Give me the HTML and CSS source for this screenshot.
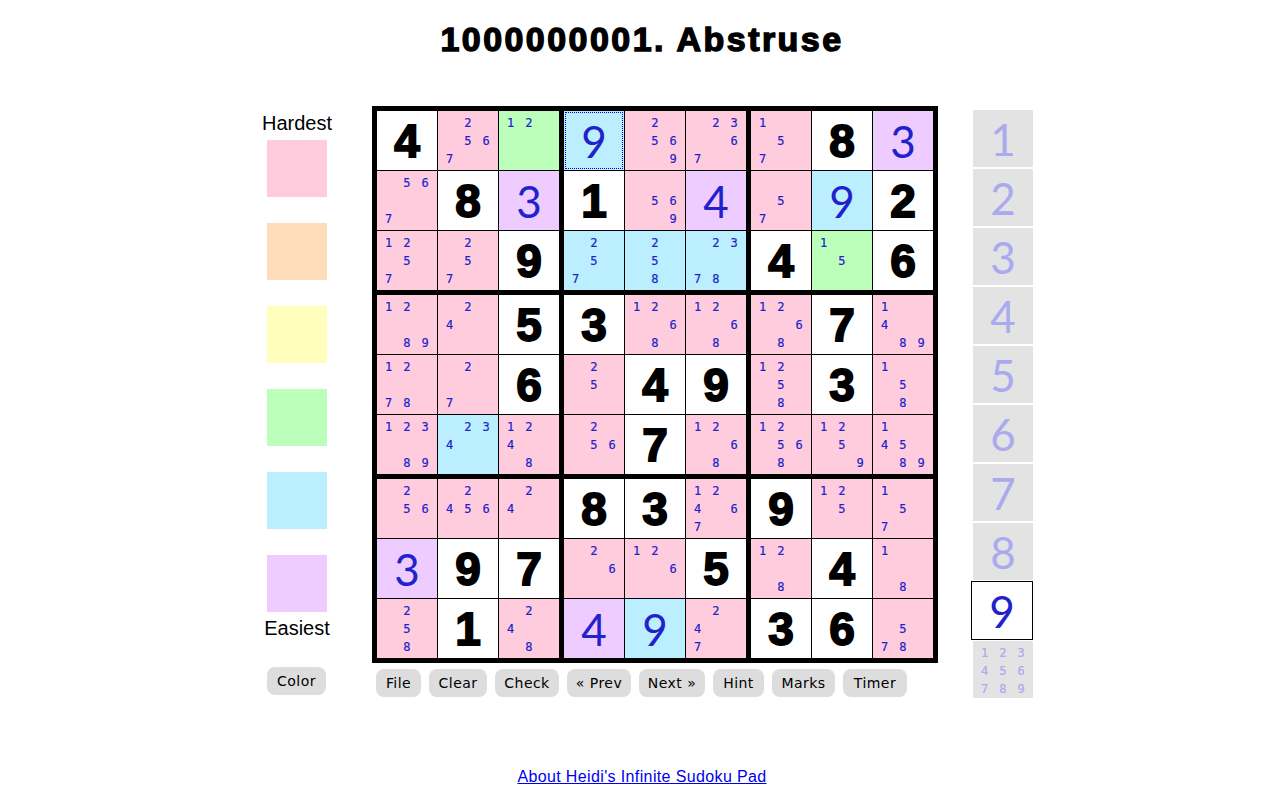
FILE: index.html
```html
<!DOCTYPE html>
<html>
<head>
    <title>1000000001. Abstruse</title>
    <link rel="stylesheet" href="styles.css">
</head>
<body>
    <h1>1000000001. Abstruse</h1>

    <div class="game">
        <div class="colors">
            <div class="color-label">Hardest</div>
            <div class="swatch pink"></div>
            <div class="swatch orange"></div>
            <div class="swatch yellow"></div>
            <div class="swatch green"></div>
            <div class="swatch blue"></div>
            <div class="swatch purple"></div>
            <div class="color-label">Easiest</div>
            <button class="color-btn">Color</button>
        </div>

        <div class="center">
            <div class="board">
                <div class="box">
                    <div class="cell given">4</div>
                    <div class="cell marks pink">  2
  5 6
7</div>
                    <div class="cell marks green">1 2</div>
                    <div class="cell marks pink">  5 6

7</div>
                    <div class="cell given">8</div>
                    <div class="cell big purple">3</div>
                    <div class="cell marks pink">1 2
  5
7</div>
                    <div class="cell marks pink">  2
  5
7</div>
                    <div class="cell given">9</div>
                </div>
                <div class="box">
                    <div class="cell big blue focus">9</div>
                    <div class="cell marks pink">  2
  5 6
    9</div>
                    <div class="cell marks pink">  2 3
    6
7</div>
                    <div class="cell given">1</div>
                    <div class="cell marks pink">
  5 6
    9</div>
                    <div class="cell big purple">4</div>
                    <div class="cell marks blue">  2
  5
7</div>
                    <div class="cell marks blue">  2
  5
  8</div>
                    <div class="cell marks blue">  2 3

7 8</div>
                </div>
                <div class="box">
                    <div class="cell marks pink">1
  5
7</div>
                    <div class="cell given">8</div>
                    <div class="cell big purple">3</div>
                    <div class="cell marks pink">
  5
7</div>
                    <div class="cell big blue">9</div>
                    <div class="cell given">2</div>
                    <div class="cell given">4</div>
                    <div class="cell marks green">1
  5</div>
                    <div class="cell given">6</div>
                </div>

                <div class="box">
                    <div class="cell marks pink">1 2

  8 9</div>
                    <div class="cell marks pink">  2
4</div>
                    <div class="cell given">5</div>
                    <div class="cell marks pink">1 2

7 8</div>
                    <div class="cell marks pink">  2

7</div>
                    <div class="cell given">6</div>
                    <div class="cell marks pink">1 2 3

  8 9</div>
                    <div class="cell marks blue">  2 3
4</div>
                    <div class="cell marks pink">1 2
4
  8</div>
                </div>
                <div class="box">
                    <div class="cell given">3</div>
                    <div class="cell marks pink">1 2
    6
  8</div>
                    <div class="cell marks pink">1 2
    6
  8</div>
                    <div class="cell marks pink">  2
  5</div>
                    <div class="cell given">4</div>
                    <div class="cell given">9</div>
                    <div class="cell marks pink">  2
  5 6</div>
                    <div class="cell given">7</div>
                    <div class="cell marks pink">1 2
    6
  8</div>
                </div>
                <div class="box">
                    <div class="cell marks pink">1 2
    6
  8</div>
                    <div class="cell given">7</div>
                    <div class="cell marks pink">1
4
  8 9</div>
                    <div class="cell marks pink">1 2
  5
  8</div>
                    <div class="cell given">3</div>
                    <div class="cell marks pink">1
  5
  8</div>
                    <div class="cell marks pink">1 2
  5 6
  8</div>
                    <div class="cell marks pink">1 2
  5
    9</div>
                    <div class="cell marks pink">1
4 5
  8 9</div>
                </div>

                <div class="box">
                    <div class="cell marks pink">  2
  5 6</div>
                    <div class="cell marks pink">  2
4 5 6</div>
                    <div class="cell marks pink">  2
4</div>
                    <div class="cell big purple">3</div>
                    <div class="cell given">9</div>
                    <div class="cell given">7</div>
                    <div class="cell marks pink">  2
  5
  8</div>
                    <div class="cell given">1</div>
                    <div class="cell marks pink">  2
4
  8</div>
                </div>
                <div class="box">
                    <div class="cell given">8</div>
                    <div class="cell given">3</div>
                    <div class="cell marks pink">1 2
4   6
7</div>
                    <div class="cell marks pink">  2
    6</div>
                    <div class="cell marks pink">1 2
    6</div>
                    <div class="cell given">5</div>
                    <div class="cell big purple">4</div>
                    <div class="cell big blue">9</div>
                    <div class="cell marks pink">  2
4
7</div>
                </div>
                <div class="box">
                    <div class="cell given">9</div>
                    <div class="cell marks pink">1 2
  5</div>
                    <div class="cell marks pink">1
  5
7</div>
                    <div class="cell marks pink">1 2

  8</div>
                    <div class="cell given">4</div>
                    <div class="cell marks pink">1

  8</div>
                    <div class="cell given">3</div>
                    <div class="cell given">6</div>
                    <div class="cell marks pink">
  5
7 8</div>
                </div>
            </div>

            <div class="buttons">
                <button>File</button>
                <button>Clear</button>
                <button>Check</button>
                <button>« Prev</button>
                <button>Next »</button>
                <button>Hint</button>
                <button>Marks</button>
                <button>Timer</button>
            </div>
        </div>

        <div class="palette">
            <div class="tile">1</div>
            <div class="tile">2</div>
            <div class="tile">3</div>
            <div class="tile">4</div>
            <div class="tile">5</div>
            <div class="tile">6</div>
            <div class="tile">7</div>
            <div class="tile">8</div>
            <div class="tile selected">9</div>
            <div class="tile-marks">1 2 3
4 5 6
7 8 9</div>
        </div>
    </div>

    <div class="about"><a href="#">About Heidi's Infinite Sudoku Pad</a></div>
</body>
</html>
```

FILE: styles.css
```css
body {
    margin: 0;
    height: 800px;
    overflow: hidden;
    background-color: white;
    font-family: "Liberation Sans", Arial, sans-serif;
    color: black;
}
h1 {
    margin: 0;
    padding: 19px 0 0 4px;
    height: 106px;
    box-sizing: border-box;
    text-align: center;
    font-size: 34px;
    line-height: 41px;
    font-weight: bold;
    letter-spacing: 2.45px;
    -webkit-text-stroke: 1.4px black;
}
.game {
    display: flex;
    align-items: flex-start;
    padding-left: 262px;
}

/* left column */
.colors {
    width: 70px;
    margin-right: 40px;
    padding-top: 4px;
    display: flex;
    flex-direction: column;
    align-items: center;
}
.color-label {
    font-size: 20px;
    line-height: 26px;
    height: 26px;
}
.swatch {
    width: 60px;
    height: 57px;
    margin-bottom: 26px;
}
.colors .swatch:nth-child(2) {
    margin-top: 4px;
}
.colors .swatch:nth-child(7) {
    margin-bottom: 3px;
}
.color-btn {
    margin: 26px 1px 0 0;
    width: 59px;
    padding: 0;
}

.pink { background-color: #ffccdd; }
.orange { background-color: #ffddbb; }
.yellow { background-color: #ffffbb; }
.green { background-color: #bbffbb; }
.blue { background-color: #bbeeff; }
.purple { background-color: #eeccff; }

/* board */
.board {
    display: grid;
    grid-template-columns: repeat(3, 182px);
    gap: 5px;
    padding: 5px;
    background-color: black;
}
.box {
    display: grid;
    grid-template-columns: repeat(3, 60px);
    grid-auto-rows: 59px;
    gap: 1px;
}
.cell {
    background-color: white;
    overflow: hidden;
}
.cell.pink { background-color: #ffccdd; }
.cell.green { background-color: #bbffbb; }
.cell.blue { background-color: #bbeeff; }
.cell.purple { background-color: #eeccff; }
.given, .big {
    display: flex;
    align-items: center;
    justify-content: center;
}
.given {
    font-size: 46px;
    font-weight: bold;
    -webkit-text-stroke: 1.8px black;
}
.big, .tile {
    font-family: Lato, sans-serif;
    font-size: 44px;
    color: #2222cc;
}
.marks, .tile-marks {
    white-space: pre;
    font-family: "DejaVu Sans Mono", monospace;
    font-size: 12px;
    line-height: 18px;
    letter-spacing: 1.93px;
    color: #2222cc;
    padding: 3px 0 0 8px;
    -webkit-text-stroke: 0.2px;
}
.focus {
    outline: 1px dotted #0000ee;
    outline-offset: -2px;
}

/* buttons */
.buttons {
    display: flex;
    gap: 8px;
    margin: 6px 0 0 4px;
}
.buttons button:nth-child(1) { width: 45px; }
.buttons button:nth-child(2) { width: 58px; }
.buttons button:nth-child(3) { width: 64px; }
.buttons button:nth-child(4) { width: 64px; }
.buttons button:nth-child(5) { width: 66px; }
.buttons button:nth-child(6) { width: 51px; }
.buttons button:nth-child(7) { width: 63px; }
.buttons button:nth-child(8) { width: 64px; }
button {
    height: 28px;
    padding: 0;
    background-color: #dddddd;
    color: black;
    border: none;
    border-radius: 8px;
    font-family: "DejaVu Sans", sans-serif;
    font-size: 14px;
    letter-spacing: 0.45px;
    cursor: pointer;
}

/* number palette */
.palette {
    width: 62px;
    margin-left: 33px;
    padding-top: 4px;
}
.tile {
    width: 60px;
    height: 57px;
    margin: 0 0 2px 2px;
    background-color: #e3e3e3;
    color: #aaaaee;
    display: flex;
    align-items: center;
    justify-content: center;
}
.tile.selected {
    margin: -1px 0 1px 0;
    border: 1px solid black;
    background-color: white;
    color: #2222cc;
}
.tile-marks {
    width: 60px;
    height: 57px;
    box-sizing: border-box;
    margin-left: 2px;
    background-color: #e3e3e3;
    color: #aaaaee;
    overflow: hidden;
}

.about {
    position: absolute;
    top: 768px;
    left: 0;
    width: 100%;
    padding-left: 4px;
    box-sizing: border-box;
    text-align: center;
    font-size: 16px;
    line-height: 18px;
    letter-spacing: 0.37px;
}
.about a {
    color: #0000ee;
}
```
